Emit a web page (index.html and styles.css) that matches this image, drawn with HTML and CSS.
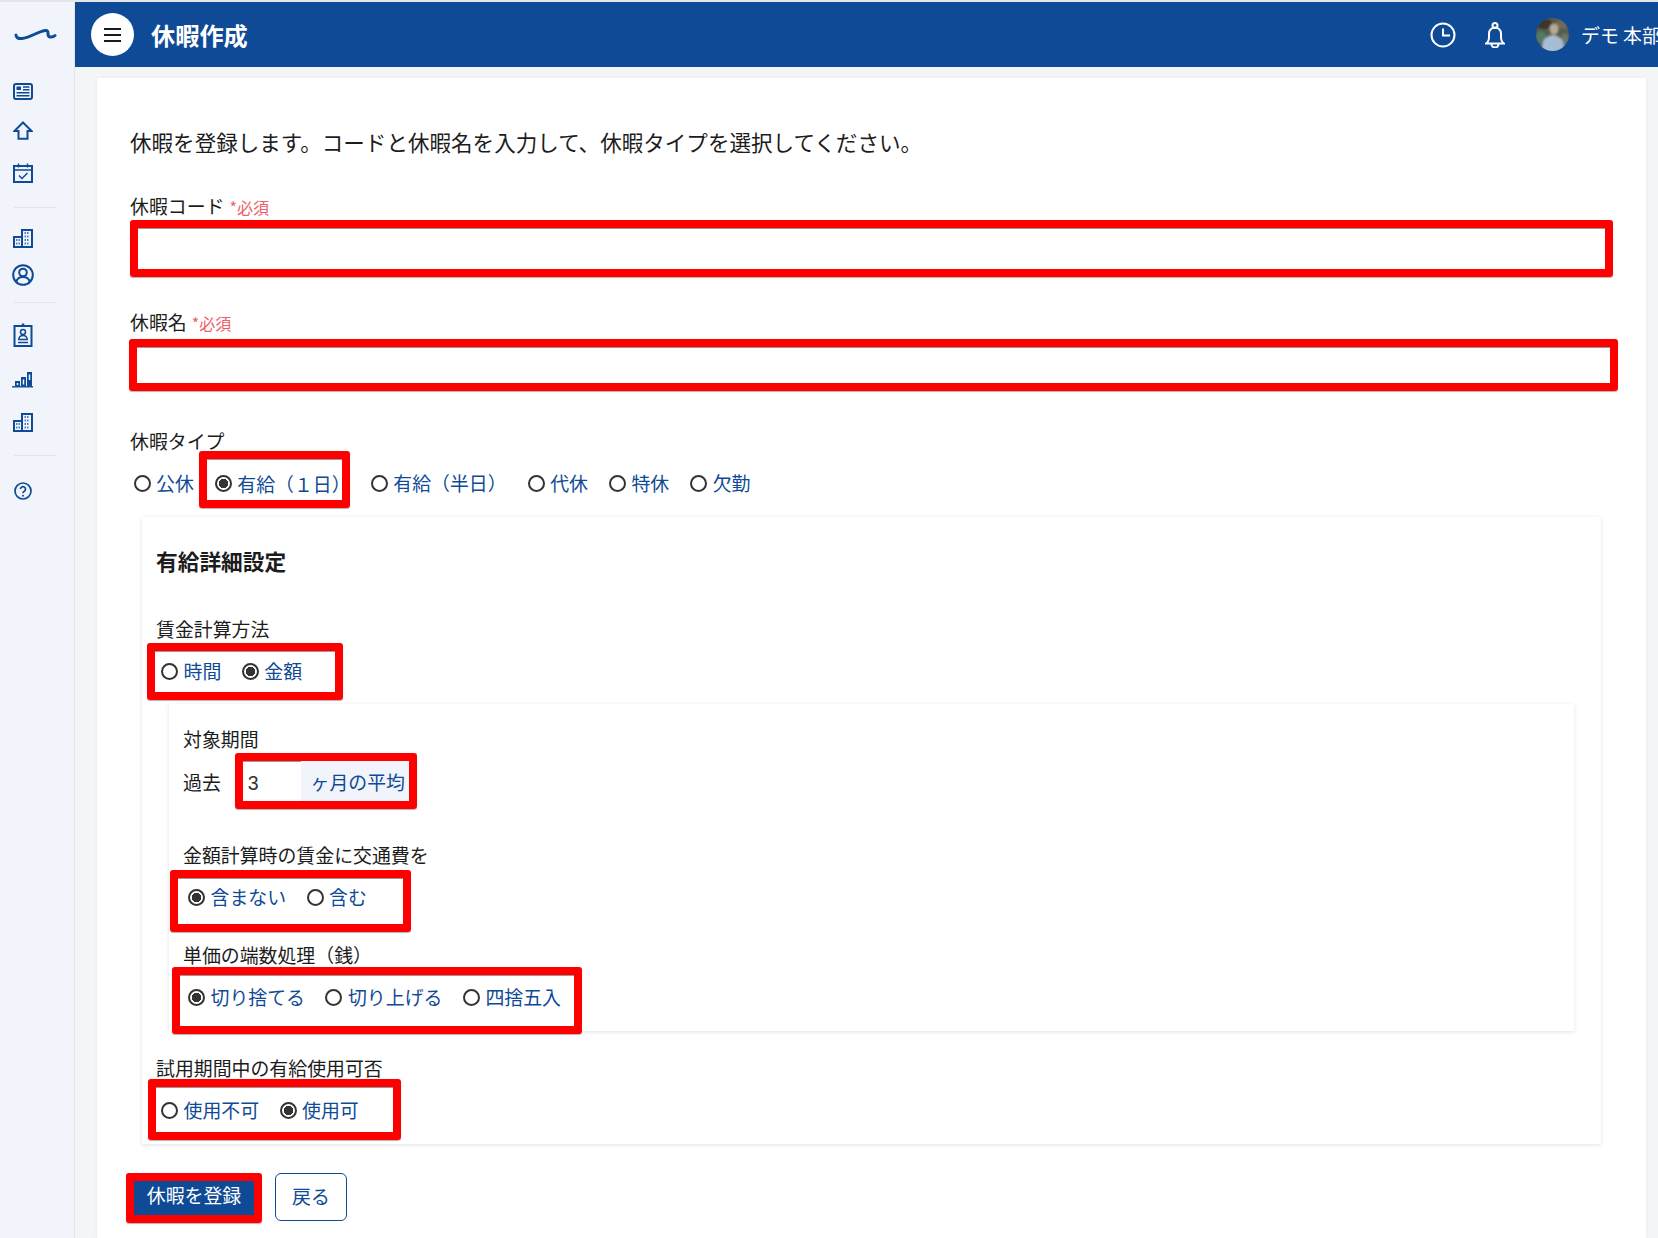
FILE: index.html
```html
<!DOCTYPE html>
<html lang="ja">
<head>
<meta charset="UTF-8" />
<meta name="viewport" content="width=device-width, initial-scale=1.0" />
<title>休暇作成</title>
<link rel="stylesheet" href="styles.css">
</head>
<body>

<!-- サイドバー -->
<aside class="sidebar">
  <div class="side-cell">
    <svg class="logo" width="43" height="14" viewBox="0 0 43 14"><path d="M2 7Q2 11 8 10.5C16 10 24 3 32 2.5C36 2.5 32 8.5 36 9C38 9.300 40 8.500 41 7.500"/></svg>
  </div>
  <div class="side-cell">
    <svg class="side-icon" width="20" height="17" viewBox="0 0 20 17"><rect x="1" y="1" width="18" height="15" rx="2"/><rect class="fill" x="3.500" y="3.500" width="4.500" height="3.500"/><path d="M10 4H16.500M10 6.800H16.500M3.500 9.800H16.500M3.500 12.800H16.500" stroke-width="1.500"/></svg>
  </div>
  <div class="side-cell">
    <svg class="side-icon" width="20" height="19" viewBox="0 0 20 19"><path d="M10 1.500L18.500 10H14.500V17.800H5.500V10H1.500Z"/></svg>
  </div>
  <div class="side-cell">
    <svg class="side-icon" width="20" height="20" viewBox="0 0 20 20"><rect x="1" y="3" width="18" height="16"/><path d="M1 7H19M5.500 0.500V4.500M14.500 0.500V4.500" stroke-width="1.500"/><path d="M6 12.500L9 15.500L14.500 10" stroke-width="1.500"/></svg>
  </div>
  <div class="side-rule"></div>
  <div class="side-cell">
    <svg class="side-icon" width="20" height="19" viewBox="0 0 20 19"><rect x="1" y="8" width="8" height="10"/><rect x="9" y="1" width="10" height="17"/><path class="dots" d="M3 11H7M3 14.500H7M11.500 4H16.500M11.500 7.500H16.500M11.500 11H16.500M11.500 14.500H16.500"/></svg>
  </div>
  <div class="side-cell">
    <svg class="side-icon" width="22" height="22" viewBox="0 0 22 22"><circle cx="11" cy="11" r="9.800"/><circle cx="11" cy="8.500" r="3.800"/><path d="M4.300 18C5 14.500 7.500 13 11 13S17 14.500 17.700 18"/></svg>
  </div>
  <div class="side-rule"></div>
  <div class="side-cell">
    <svg class="side-icon" width="20" height="24" viewBox="0 0 20 24"><rect x="1.500" y="3" width="17" height="20"/><path d="M10 0.500V4" stroke-width="2.500"/><circle cx="10" cy="9" r="2.500" stroke-width="1.500"/><path d="M5.800 16.500C6 13.500 7.500 12.500 10 12.500S14 13.500 14.200 16.500Z" stroke-width="1.500"/><path d="M5 19.500H15" stroke-width="1.500"/></svg>
  </div>
  <div class="side-cell">
    <svg class="side-icon" width="21" height="17" viewBox="0 0 21 17"><path d="M0 15.800H21" stroke-width="1.400"/><rect class="fill" x="3" y="10" width="5" height="5.500"/><rect class="fill" x="9" y="6" width="5" height="9.500"/><rect class="fill" x="15" y="1" width="5" height="14.500"/><path class="gap" d="M5.500 12V14M11.500 8.500V13.500M17.500 3.500V9"/></svg>
  </div>
  <div class="side-cell">
    <svg class="side-icon" width="20" height="19" viewBox="0 0 20 19"><rect x="1" y="8" width="8" height="10"/><rect x="9" y="1" width="10" height="17"/><path class="dots" d="M3 11H7M3 14.500H7M11.500 4H16.500M11.500 7.500H16.500M11.500 11H16.500M11.500 14.500H16.500"/></svg>
  </div>
  <div class="side-rule"></div>
  <div class="side-cell">
    <svg class="side-icon" width="18" height="18" viewBox="0 0 18 18"><circle cx="9" cy="9" r="8" stroke-width="1.700"/><path d="M6.500 7A2.500 2.500 0 1 1 10.300 9.200C9.400 9.700 9 10.200 9 11.300" stroke-width="1.700"/><circle class="fill" cx="9" cy="13.700" r="1"/></svg>
  </div>
</aside>

<div class="main">
  <!-- ヘッダー -->
  <header class="header">
    <button class="menu-btn" type="button">
      <svg width="17" height="14" viewBox="0 0 17 14"><path d="M0 1H17M0 7H17M0 13H17"/></svg>
    </button>
    <h1 class="page-title">休暇作成</h1>
    <div class="header-right">
      <svg class="header-icon clock" width="26" height="26" viewBox="0 0 26 26"><circle cx="13" cy="13" r="11.500"/><path d="M13 6.500V13.500H20"/></svg>
      <svg class="header-icon bell" width="20" height="26" viewBox="0 0 20 26"><circle cx="10" cy="3.500" r="2.500"/><path d="M1 21.500C3.500 20 4 18 4 15V11.500A6 6 0 0 1 16 11.500V15C16 18 16.500 20 19 21.500ZM6.500 22A3.500 3.500 0 0 0 13.500 22"/></svg>
      <svg class="avatar" width="33" height="33" viewBox="0 0 33 33">
        <defs><clipPath id="avatar-clip"><circle cx="16.500" cy="16.500" r="16.500"/></clipPath><filter id="avatar-blur"><feGaussianBlur stdDeviation="0.800"/></filter></defs>
        <g clip-path="url(#avatar-clip)">
          <rect width="33" height="33" fill="#585a4c"/>
          <g filter="url(#avatar-blur)">
            <ellipse cx="5" cy="19" rx="5" ry="6" fill="#4f7c66"/>
            <ellipse cx="29" cy="21" rx="4" ry="6" fill="#66786a"/>
            <ellipse cx="8" cy="6" rx="9" ry="5" fill="#3a352c"/>
            <ellipse cx="27" cy="6" rx="7" ry="5" fill="#6e6a5a"/>
            <ellipse cx="17" cy="29" rx="11" ry="12" fill="#a6bdd4"/>
            <ellipse cx="18" cy="11" rx="4.500" ry="5.500" fill="#b9a997"/>
          </g>
        </g>
      </svg>
      <span class="user-name">デモ 本部</span>
    </div>
  </header>

  <div class="content">
    <form class="card">
      <p class="intro">休暇を登録します。コードと休暇名を入力して、休暇タイプを選択してください。</p>

      <label class="label label-code">休暇コード<span class="required">*必須</span></label>
      <div class="mark mark-code"><input class="field" type="text" /></div>

      <label class="label label-name">休暇名<span class="required">*必須</span></label>
      <div class="mark mark-name"><input class="field" type="text" /></div>

      <div class="label label-type">休暇タイプ</div>
      <div class="type-row">
        <label class="radio plain first"><input type="radio" name="type" /><span>公休</span></label>
        <div class="mark mark-type">
          <label class="radio"><input type="radio" name="type" checked /><span>有給（１日）</span></label>
        </div>
        <label class="radio plain"><input type="radio" name="type" /><span>有給（半日）</span></label>
        <label class="radio plain"><input type="radio" name="type" /><span>代休</span></label>
        <label class="radio plain"><input type="radio" name="type" /><span>特休</span></label>
        <label class="radio plain"><input type="radio" name="type" /><span>欠勤</span></label>
      </div>

      <!-- 有給の詳細 -->
      <section class="detail">
        <h2 class="detail-title">有給詳細設定</h2>

        <div class="label label-wage">賃金計算方法</div>
        <div class="mark mark-wage radios">
          <label class="radio"><input type="radio" name="wage" /><span>時間</span></label>
          <label class="radio"><input type="radio" name="wage" checked /><span>金額</span></label>
        </div>

        <div class="sub-detail">
          <div class="label">対象期間</div>
          <div class="period-row">
            <span class="period-label">過去</span>
            <div class="mark mark-period">
              <input class="period-input" type="text" value="3" />
              <span class="period-unit">ヶ月の平均</span>
            </div>
          </div>

          <div class="label label-commute">金額計算時の賃金に交通費を</div>
          <div class="mark mark-commute radios">
            <label class="radio"><input type="radio" name="commute" checked /><span>含まない</span></label>
            <label class="radio"><input type="radio" name="commute" /><span>含む</span></label>
          </div>

          <div class="label label-round">単価の端数処理（銭）</div>
          <div class="mark mark-round radios">
            <label class="radio"><input type="radio" name="round" checked /><span>切り捨てる</span></label>
            <label class="radio"><input type="radio" name="round" /><span>切り上げる</span></label>
            <label class="radio"><input type="radio" name="round" /><span>四捨五入</span></label>
          </div>
        </div>

        <div class="label label-trial">試用期間中の有給使用可否</div>
        <div class="mark mark-trial radios">
          <label class="radio"><input type="radio" name="trial" /><span>使用不可</span></label>
          <label class="radio"><input type="radio" name="trial" checked /><span>使用可</span></label>
        </div>
      </section>

      <div class="actions">
        <div class="mark mark-submit"><button class="btn-submit" type="button">休暇を登録</button></div>
        <button class="btn-back" type="button">戻る</button>
      </div>
    </form>
  </div>
</div>

</body>
</html>
```

FILE: styles.css
```css
* {
  box-sizing: border-box;
}

body {
  display: flex;
  height: 1238px;
  margin: 0;
  overflow: hidden;
  border-top: 2px solid #e4e5e7;
  background-color: #f4f5f7;
  color: #1c1c1c;
  font-family: "Noto Sans CJK JP", "Noto Sans", sans-serif;
  font-size: 18.9px;
}

/* サイドバー */
.sidebar {
  display: grid;
  flex: 0 0 75px;
  grid-template-rows: 70px 39px 39px 46px 22px 41px 32px 22px 44px 45px 40px 26px 46px;
  align-content: start;
  background-color: #f1f5fb;
  border-right: 1px solid #e3e6ec;
}

.side-cell {
  display: flex;
  align-items: center;
  justify-content: center;
  width: 45px;
}

.side-cell:first-child {
  align-items: flex-start;
  justify-content: flex-start;
  padding: 26px 0 0 14px;
  width: auto;
}

.logo {
  fill: none;
  stroke: #0f4a96;
  stroke-width: 3;
  stroke-linecap: round;
}

.side-icon {
  fill: none;
  stroke: #0f4a96;
  stroke-width: 2;
}

.side-icon .fill {
  fill: #0f4a96;
  stroke: none;
}

.side-icon .dots {
  stroke-width: 2;
  stroke-dasharray: 1.5 1;
  opacity: 0.7;
}

.side-icon .gap {
  stroke: #f1f5fb;
  stroke-width: 1.500;
}

.side-rule {
  align-self: center;
  width: 43px;
  height: 1px;
  margin-left: 14px;
  background-color: #e2e5ea;
}

/* ヘッダー */
.main {
  display: flex;
  flex: 1;
  flex-direction: column;
  min-width: 0;
}

.header {
  display: flex;
  flex: 0 0 65px;
  align-items: center;
  padding-left: 16px;
  overflow: hidden;
  background-color: #0f4a96;
  color: #fff;
}

.menu-btn {
  display: flex;
  align-items: center;
  justify-content: center;
  width: 43px;
  height: 43px;
  padding: 0;
  border: none;
  border-radius: 50%;
  background-color: #fff;
}

.menu-btn svg {
  fill: none;
  stroke: #1a1a1a;
  stroke-width: 2;
}

.page-title {
  margin: 0 0 0 17px;
  font-size: 24.2px;
  font-weight: 700;
  line-height: 32px;
}

.header-right {
  display: flex;
  align-items: center;
  margin-left: auto;
}

.header-icon {
  fill: none;
  stroke: #fff;
  stroke-width: 2;
}

.bell {
  margin-left: 29px;
}

.avatar {
  margin-left: 31px;
}

.user-name {
  width: 77px;
  margin-left: 12px;
  overflow: hidden;
  white-space: nowrap;
}

/* 本文 */
.content {
  display: flex;
  flex: 1;
  padding: 11px 12px 0 22px;
}

.card {
  flex: 1;
  padding-left: 33px;
  background-color: #fff;
  box-shadow: 0 0 4px rgba(0, 0, 0, 0.05);
}

.intro {
  margin: 49px 0 0;
  font-size: 21.550px;
  line-height: 30px;
}

.label {
  padding-bottom: 2px;
  line-height: 22px;
}

.required {
  margin-left: 5px;
  color: #ee5f6c;
  font-size: 16px;
  line-height: 1;
}

/* 赤枠の注記 */
.mark {
  border: 8px solid #f00;
  border-radius: 3px;
  box-shadow: 0 1px 1px rgba(0, 0, 0, 0.3), inset 0 1px 0 #999;
}

.label-code {
  display: block;
  margin-top: 38px;
}

.mark-code {
  height: 57px;
  margin: 1px 33px 0 0;
}

.label-name {
  display: block;
  margin-top: 34px;
}

.mark-name {
  height: 52px;
  margin: 4px 28px 0 -1px;
}

.field {
  display: block;
  width: 100%;
  height: 100%;
  border: none;
  background: transparent;
}

.label-type {
  margin-top: 39px;
}

/* ラジオボタン */
.radio {
  display: inline-flex;
  align-items: center;
  height: 24px;
  color: #0f4a96;
  line-height: 24px;
  white-space: nowrap;
}

.radio input {
  width: 17px;
  height: 17px;
  margin: 0 5.500px 0 0;
  border: 2px solid #333;
  border-radius: 50%;
  background-color: #fff;
  appearance: none;
}

.radio input:checked {
  background: radial-gradient(circle, #333 0 4.500px, #fff 5px);
}

.type-row {
  display: flex;
  align-items: center;
  margin-top: -3px;
}

.type-row .plain {
  margin: 7px 21px 0 0;
}

.type-row .first {
  margin-right: 5px;
  margin-left: 3.500px;
}

.mark-type {
  flex: 0 0 151px;
  min-width: 0;
  height: 57px;
  margin-right: 21px;
  padding: 11px 0 0 8px;
}

.radios {
  display: flex;
  gap: 20.500px;
}

/* 有給詳細 */
.detail {
  margin: 9px 45px 0 12px;
  padding: 29px 0 4px 14px;
  background-color: #fff;
  box-shadow: 0 1px 4px rgba(0, 0, 0, 0.12);
}

.detail-title {
  margin: 0;
  font-size: 21.700px;
  font-weight: 700;
  line-height: 30px;
}

.label-wage {
  margin-top: 42px;
}

.mark-wage {
  width: 196px;
  height: 57px;
  margin: 1px 0 0 -9px;
  padding: 8px 0 0 6px;
}

.sub-detail {
  display: flow-root;
  margin: 4px 27px 0 13px;
  padding: 24px 0 0 14px;
  background-color: #fff;
  box-shadow: 0 1px 4px rgba(0, 0, 0, 0.12);
}

.period-row {
  display: flex;
  align-items: center;
  margin-top: 1px;
}

.period-label {
  margin: 2px 14px 0 0;
  line-height: 24px;
}

.mark-period {
  display: flex;
  width: 182px;
  height: 56px;
}

.period-input {
  width: 58px;
  padding: 4px 0 0 5px;
  border: none;
  background: transparent;
  color: #333;
  font-family: "Liberation Sans", sans-serif;
  font-size: 19.500px;
}

.period-unit {
  flex: 1;
  padding: 4px 0 0 6px;
  background-color: #f1f5fb;
  color: #0f4a96;
  line-height: 34px;
  text-align: center;
}

.label-commute {
  margin-top: 35px;
}

.mark-commute {
  width: 241px;
  height: 62px;
  margin: 2px 0 0 -13px;
  padding: 7px 0 0 10px;
}

.label-round {
  margin-top: 12px;
}

.mark-round {
  width: 410px;
  height: 67px;
  margin: -1px 0 -3px -11px;
  padding: 10px 0 0 8px;
}

.label-trial {
  margin-top: 26px;
}

.mark-trial {
  width: 253px;
  height: 61px;
  margin: -2px 0 0 -8px;
  padding: 11px 0 0 5px;
}

/* ボタン */
.actions {
  display: flex;
  align-items: flex-start;
  gap: 13px;
  margin: 29px 0 0 -4px;
}

.mark-submit {
  width: 136px;
  height: 50px;
}

.btn-submit {
  display: block;
  width: 100%;
  height: 100%;
  padding: 0 0 7px;
  border: none;
  background-color: #0f4a96;
  color: #fff;
  font: inherit;
}

.btn-back {
  width: 72px;
  height: 48px;
  padding: 0 0 3px;
  border: 1px solid #0f4a96;
  border-radius: 6px;
  background-color: #fff;
  color: #0f4a96;
  font: inherit;
}
```
